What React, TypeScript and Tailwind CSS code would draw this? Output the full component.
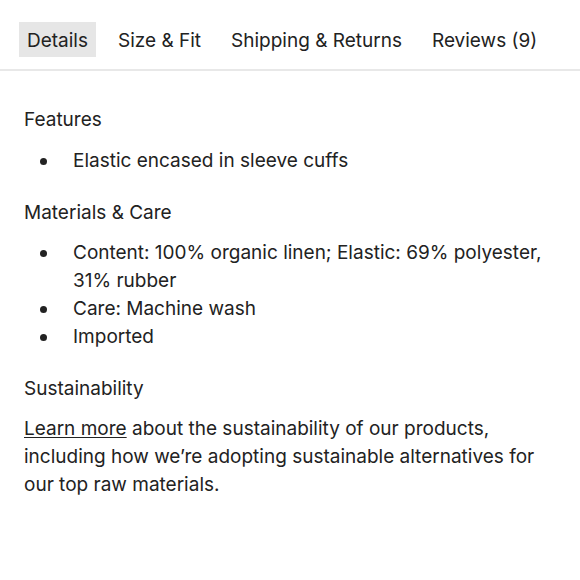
const tabs = ['Details', 'Size & Fit', 'Shipping & Returns', 'Reviews (9)'];

const Bullet = ({ children }: { children: React.ReactNode }) => (
  <li className="flex">
    <span className="w-[49px] shrink-0 pl-[16px] pt-[11px]">
      <span className="block w-[7px] h-[7px] rounded-full bg-[#222]"></span>
    </span>
    <span>{children}</span>
  </li>
);

export default function App() {
  return (
    <div className="w-[580px] h-[580px] bg-white text-[#222] text-[19px] leading-[28px] font-['Inter','Noto_Sans',sans-serif]">
      <div className="flex items-center gap-[14px] pl-[19px] pt-[22px] pb-[12px] border-b-2 border-[#e8e8e8]">
        {tabs.map((tab, i) => (
          <div
            key={tab}
            className={`h-[35px] flex items-center pt-[2px] px-[8px] ${i === 0 ? 'bg-[#e6e6e6]' : ''}`}
          >
            {tab}
          </div>
        ))}
      </div>

      <div className="px-[24px] pt-[35px]">
        <h3>Features</h3>
        <ul className="mt-[13px]">
          <Bullet>Elastic encased in sleeve cuffs</Bullet>
        </ul>

        <h3 className="mt-[24px]">Materials &amp; Care</h3>
        <ul className="mt-[12px]">
          <Bullet>Content: 100% organic linen; Elastic: 69% polyester, 31% rubber</Bullet>
          <Bullet>Care: Machine wash</Bullet>
          <Bullet>Imported</Bullet>
        </ul>

        <h3 className="mt-[24px]">Sustainability</h3>
        <p className="mt-[12px]">
          <a className="underline underline-offset-2">Learn more</a> about the sustainability of our products, including how we’re adopting sustainable alternatives for our top raw materials.
        </p>
      </div>
    </div>
  );
}
